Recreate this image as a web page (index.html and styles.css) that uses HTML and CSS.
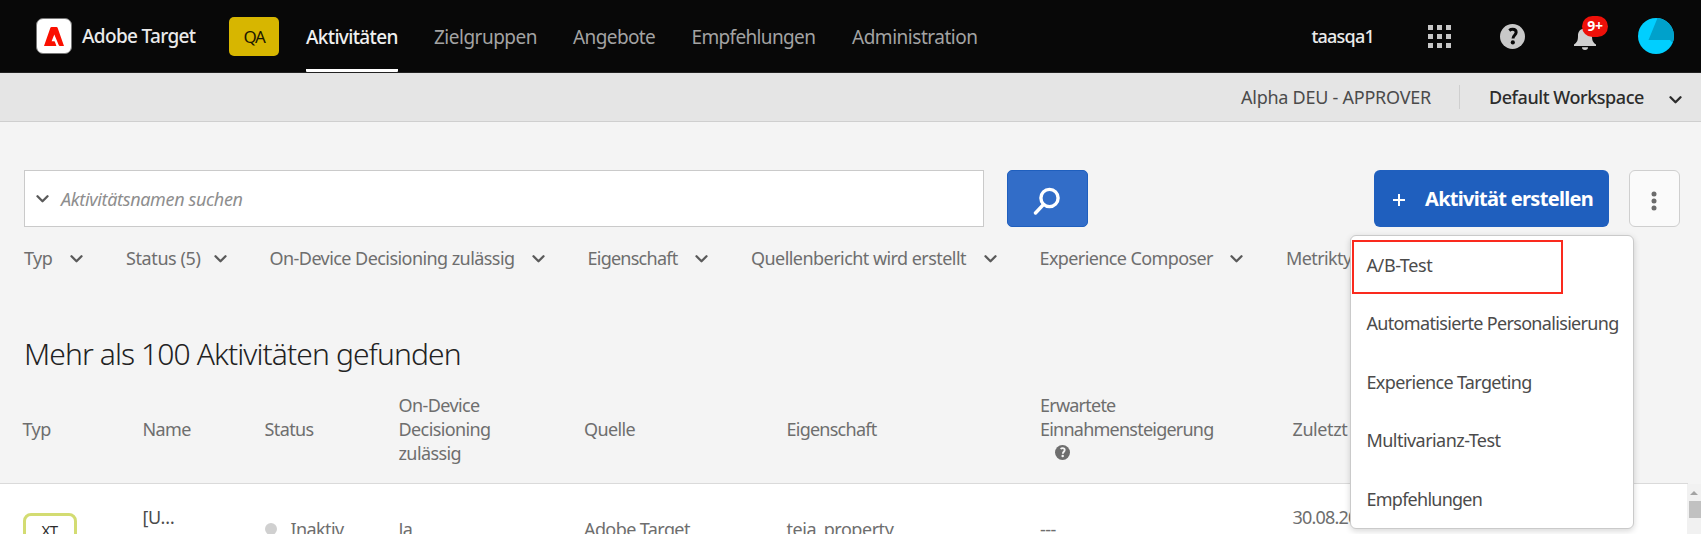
FILE: index.html
```html
<!DOCTYPE html>
<html lang="de">
<head>
<meta charset="utf-8">
<title>Adobe Target</title>
<link rel="stylesheet" href="styles.css">
</head>
<body>
<svg class="defs" width="0" height="0" aria-hidden="true">
  <symbol id="chev" viewBox="0 0 13 8"><path d="M1.5 1.3 6.5 6.3 11.5 1.3" fill="none" stroke="currentColor" stroke-width="2.3" stroke-linecap="round" stroke-linejoin="round"/></symbol>
  <symbol id="help" viewBox="0 0 24 24"><circle cx="12" cy="12" r="12" fill="currentColor"/><path d="M8.9 6.2C9.9 5.4 11 5.1 12.2 5.1c2.1 0 3.3 1.1 3.3 2.9 0 2.7-3 2.9-3 5.8" fill="none" stroke="var(--hole)" stroke-width="2.9"/><circle cx="12.3" cy="17.7" r="2" fill="var(--hole)"/></symbol>
</svg>
<header class="top">
  <div class="logo"><svg width="20" height="19" viewBox="0 0 20 19"><path d="M7.500 0h5q.8 0 1.100.8L20 19h-4.200q-.7 0-1-.7L10.300 7.400 7.600 14.200h2.600q.5 0 .7.500L12.400 19H0L6.400.8Q6.700 0 7.500 0z" fill="#fa0f00"/></svg></div>
  <span class="brand">Adobe Target</span>
  <span class="qa">QA</span>
  <nav class="nav">
    <a class="n1 active">Aktivitäten</a><a class="n2">Zielgruppen</a><a class="n3">Angebote</a><a class="n4">Empfehlungen</a><a class="n5">Administration</a>
  </nav>
  <span class="org">taasqa1</span>
  <svg class="apps" width="23" height="23" viewBox="0 0 23 23" fill="#c8c8c8"><path d="M0 0h5v5H0zM9 0h5v5H9zM18 0h5v5h-5zM0 9h5v5H0zM9 9h5v5H9zM18 9h5v5h-5zM0 18h5v5H0zM9 18h5v5H9zM18 18h5v5h-5z"/></svg>
  <svg class="help" width="25" height="25"><use href="#help"/></svg>
  <div class="bell"><svg width="22" height="24" viewBox="0 0 22 24" fill="#d0d0d0"><path d="M9 2.8C9 .3 13 .3 13 2.8c3.8.9 5 3.800 5 7.200 0 4.500 1 6.500 4 8.500V20H0v-1.500c3-2 4-4 4-8.500 0-3.400 1.200-6.300 5-7.200zM8 21.300h6a3 2.600 0 0 1-6 0z"/></svg><span class="count">9+</span></div>
  <svg class="avatar" width="36" height="36" viewBox="0 0 36 36"><circle cx="18" cy="18" r="18" fill="#00cfff"/><path d="M19.500.1A18 18 0 0 1 34.500 25L32 22H10.500z" fill="#00a1cb"/></svg>
</header>
<div class="workspace">
  <span class="role">Alpha DEU - APPROVER</span>
  <span class="ws">Default Workspace</span>
  <svg class="chev" width="13" height="8"><use href="#chev"/></svg>
</div>
<main>
  <div class="tools">
    <div class="search"><svg class="chev" width="13" height="8"><use href="#chev"/></svg><span class="ph">Aktivitätsnamen suchen</span></div>
    <div class="go"><svg width="27" height="28" viewBox="0 0 27 28" fill="none" stroke="#fff" stroke-width="3.400" stroke-linecap="round"><circle cx="16.500" cy="11" r="8.600"/><path d="M10.500 17.500 2.500 26"/></svg></div>
    <div class="create"><svg width="12" height="12" viewBox="0 0 12 12" stroke="#fff" stroke-width="2"><path d="M6 0v12M0 6h12"/></svg><span>Aktivität erstellen</span></div>
    <div class="more"><svg width="6" height="20" viewBox="0 0 6 20" fill="#6b6b6b"><circle cx="3" cy="3" r="2.500"/><circle cx="3" cy="10" r="2.500"/><circle cx="3" cy="17" r="2.500"/></svg></div>
  </div>
  <div class="filters">
    <span class="f f1"><span>Typ</span><svg class="chev" width="13" height="8"><use href="#chev"/></svg></span>
    <span class="f f2"><span>Status (5)</span><svg class="chev" width="13" height="8"><use href="#chev"/></svg></span>
    <span class="f f3"><span>On-Device Decisioning zulässig</span><svg class="chev" width="13" height="8"><use href="#chev"/></svg></span>
    <span class="f f4"><span>Eigenschaft</span><svg class="chev" width="13" height="8"><use href="#chev"/></svg></span>
    <span class="f f5"><span>Quellenbericht wird erstellt</span><svg class="chev" width="13" height="8"><use href="#chev"/></svg></span>
    <span class="f f6"><span>Experience Composer</span><svg class="chev" width="13" height="8"><use href="#chev"/></svg></span>
    <span class="f f7"><span>Metrikty</span></span>
  </div>
  <h1>Mehr als 100 Aktivitäten gefunden</h1>
  <div class="row head">
    <span>Typ</span><span>Name</span><span>Status</span><span>On-Device<br>Decisioning<br>zulässig</span><span>Quelle</span><span class="prop">Eigenschaft</span>
    <span class="lift">Erwartete<br>Einnahmensteigerung<br><svg class="tip" width="15" height="15"><use href="#help"/></svg></span><span class="last">Zuletzt</span>
  </div>
  <div class="list">
    <div class="row body">
      <span class="xt">XT</span><span class="name">[U…</span><span class="state"><i></i>Inaktiv</span><span>Ja</span><span>Adobe Target</span><span class="key">teja_property</span><span>---</span><span class="date">30.08.20</span>
    </div>
    <div class="scroll"><svg width="8" height="4" viewBox="0 0 8 4"><path d="M4 0 8 4H0z" fill="#a3a3a3"/></svg><div class="thumb"></div></div>
  </div>
</main>
<div class="menu">
  <a class="m1">A/B-Test</a><a class="m2">Automatisierte Personalisierung</a><a class="m3">Experience Targeting</a><a class="m4">Multivarianz-Test</a><a class="m5">Empfehlungen</a>
  <div class="mark"></div>
</div>
</body>
</html>
```
FILE: styles.css
```css
*{box-sizing:border-box}
body{margin:0;height:534px;overflow:hidden;position:relative;background:#f4f4f4;font-family:"Noto Sans","Open Sans",sans-serif;font-size:18px;line-height:24px;letter-spacing:-.6px;color:#6e6e6e}
svg{display:block;flex:none}
span,a{white-space:nowrap}
.defs{position:absolute}
.top{height:73px;background:#080808;border-bottom:1px solid #222;display:flex;align-items:center;padding-left:36px;color:#eaeaea}
.logo{width:36px;height:36px;border-radius:7px;background:#fff;border:1px solid #777;display:flex;align-items:center;justify-content:center;flex:none}
.brand{width:119px;margin-left:10px;font-size:19px;font-weight:500;letter-spacing:-.65px;margin-top:-1px}
.qa{margin-left:28px;width:50px;height:39px;border-radius:5px;background:#d7b600;color:#1c1800;font-size:17px;letter-spacing:-1.300px;line-height:40px;text-align:center;margin-top:1px}
.nav{display:flex;height:72px;margin-left:27px;line-height:75px;font-size:19px;color:#a3a3a3}
.nav a{height:72px}
.nav .active{color:#f0f0f0;font-weight:500;border-bottom:3px solid #fff;border-radius:1px}
.n1{width:92px;margin-right:36px;letter-spacing:-.65px}
.n2{width:103px;margin-right:36px;letter-spacing:-.5px}
.n3{width:83px;margin-right:35.500px;letter-spacing:-.6px}
.n4{width:124px;margin-right:36.500px;letter-spacing:-.65px}
.n5{width:126px;letter-spacing:-.48px}
.org{margin-left:333.500px;width:62.500px;font-weight:500;letter-spacing:-.8px;margin-top:-1px}
.apps{margin-left:54px}
.help{margin-left:49px;color:#c8c8c8;--hole:#080808}
.bell{position:relative;margin-left:49px;width:22px;padding-top:3px}
.count{position:absolute;left:8px;top:-7px;width:26px;height:21px;border-radius:11px;background:#ee1009;color:#fff;font-weight:700;font-size:14px;line-height:19px;letter-spacing:-.3px;text-align:center}
.avatar{margin-left:42px}
.workspace{height:49px;background:#e5e5e5;border-bottom:1px solid #cfcfcf;display:flex;align-items:center;justify-content:flex-end;padding-right:19px;color:#4b4b4b}
.role{width:219px;height:24px;border-right:1px solid #cfcfcf;letter-spacing:-.25px}
.ws{width:156px;margin:0 24px 0 29px;color:#2c2c2c;font-weight:500;letter-spacing:-.45px}
.workspace .chev{color:#2c2c2c;margin-top:5px}
.tools{display:flex;padding:48px 0 0 24px}
.search{width:960px;height:57px;background:#fff;border:1px solid #cacaca;display:flex;align-items:center;padding-left:10.500px}
.ph{margin-left:12.500px;font-style:italic;color:#8e8e8e;letter-spacing:-.35px}
.go{margin-left:23px;width:81px;height:57px;border-radius:5px;background:#326dc8;border:1px solid #1f5fbe;display:flex;align-items:center;justify-content:center;padding:4px 3px 0 0}
.create{margin-left:286px;width:235px;height:57px;border-radius:6px;background:#1f5fbe;color:#fff;font-size:20px;font-weight:700;display:flex;align-items:center;padding-left:19px;gap:20px;letter-spacing:-.7px}
.create svg{margin-top:3px}
.more{margin-left:20px;width:51px;height:57px;border:1px solid #cfcfcf;border-radius:6px;background:#fafafa;display:flex;align-items:center;justify-content:center;padding:4px 1px 0 0}
.filters{display:flex;padding:19px 0 0 24px;height:84px}
.f{display:flex;height:24px;align-items:center;justify-content:space-between;flex:none}
.chev{color:#5a5a5a}
.f .chev{margin-top:2px}
.f1{width:59px;margin-right:43px}
.f2{width:100.500px;margin-right:43px;letter-spacing:-.4px}
.f3{width:275.500px;margin-right:42.500px;letter-spacing:-.56px}
.f4{width:120.500px;margin-right:43px;letter-spacing:-.75px}
.f5{width:245.500px;margin-right:43px;letter-spacing:-.55px}
.f6{width:203px;margin-right:43.500px;letter-spacing:-.6px}
h1{margin:0;padding-left:24px;height:77px;font-size:30px;font-weight:300;line-height:86px;letter-spacing:-.9px;color:#222}
.row{display:grid;grid-template-columns:120px 122px 134px 185.500px 202.500px 253.500px 252.500px 1fr;padding-left:22.500px;align-items:center}
.head{height:96px;border-bottom:1px solid #dadada;padding-bottom:13px;width:1688px;letter-spacing:-.6px}
.prop{letter-spacing:-.75px}
.last{letter-spacing:-.4px}
.lift{letter-spacing:-.77px}
.tip{margin:4px 0 5px 15px;--hole:#f4f4f4}
.list{display:flex;height:55px;overflow:hidden;background:#fff}
.body{height:90px;width:1687px;flex:none}
.xt{width:54px;height:40px;border:3px solid #d3dc72;border-radius:8px;color:#2c2c2c;font-size:15px;letter-spacing:-.5px;line-height:29px;text-align:center;margin-top:8px}
.name{color:#4b4b4b;align-self:start;padding-top:21px;letter-spacing:-.3px}
.state{display:flex;align-items:center}
.state i{width:12px;height:12px;border-radius:6px;background:#d0d0d0;margin-right:14px}
.key{letter-spacing:-.45px}
.date{align-self:start;padding-top:21px;letter-spacing:-.8px}
.scroll{width:14px;background:#f1f1f1;display:flex;flex-direction:column;align-items:center;padding-top:7px}
.thumb{width:12px;height:17px;background:#c1c1c1;margin:6px 0 0 2px;flex:none}
.menu{position:absolute;left:1350px;top:235px;width:284px;height:294px;background:#fff;border:1px solid #cacaca;border-radius:6px;box-shadow:0 2px 6px rgba(0,0,0,.16);color:#4b4b4b;display:flex;flex-direction:column;padding-left:15.500px}
.menu a{line-height:58px;height:58.400px;flex:none}
.m1{letter-spacing:-.4px}
.m4{letter-spacing:-.55px}
.m2{letter-spacing:-.67px}
.m3{letter-spacing:-.65px}
.m5{letter-spacing:-.75px}
.mark{position:absolute;left:1px;top:4px;width:211px;height:54px;border:2px solid #fa2a1e}
```
